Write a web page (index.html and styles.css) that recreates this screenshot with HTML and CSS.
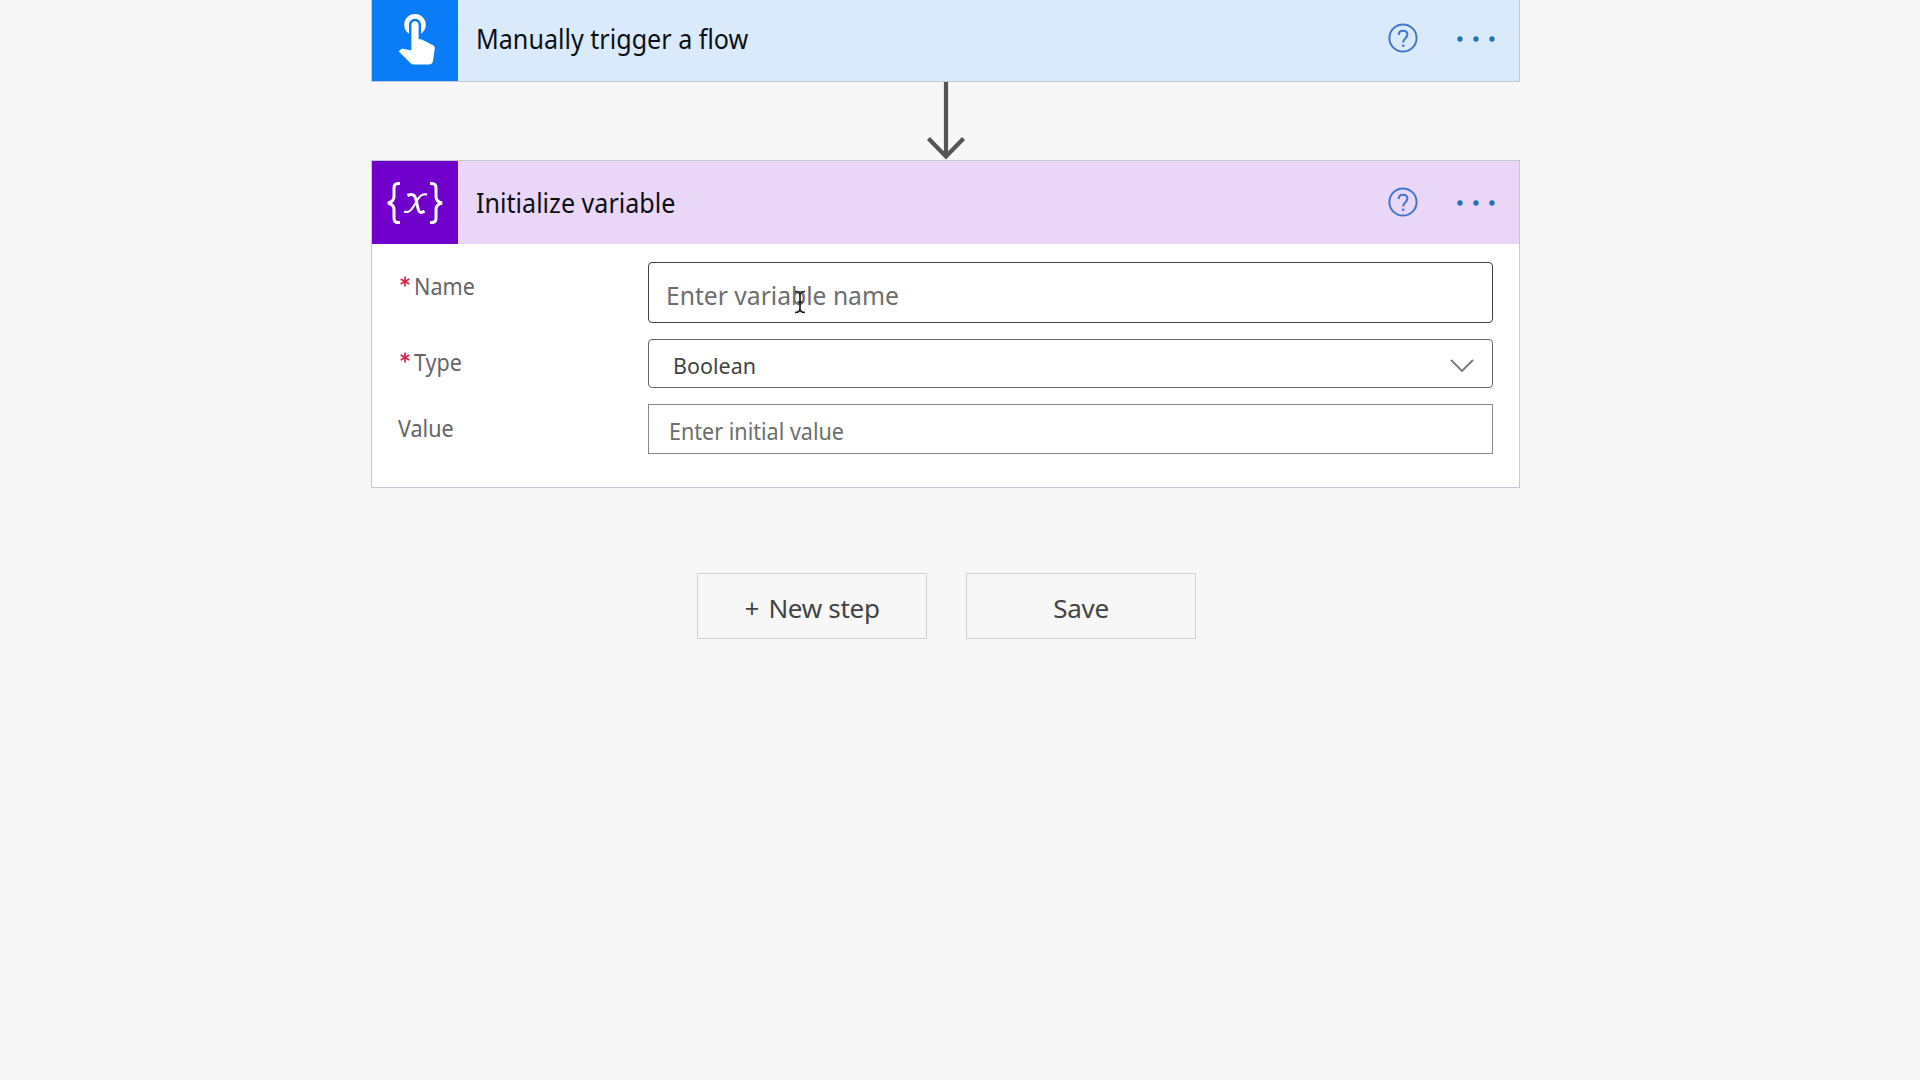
FILE: index.html
```
<!DOCTYPE html>
<html lang="en">
<head>
<meta charset="utf-8">
<title>Flow designer</title>
<link rel="stylesheet" href="styles.css">
</head>
<body>
<main class="flow">
  <section class="card card-trigger">
    <header class="head">
      <div class="tile tile-touch">
        <svg width="38.4" height="50.4" viewBox="4 3 16 21" fill="#fff"><path d="M9 11.24V7.5C9 6.12 10.12 5 11.5 5S14 6.12 14 7.5v3.74c1.21-.81 2-2.18 2-3.74C16 5.01 13.99 3 11.5 3S7 5.01 7 7.5c0 1.56.79 2.93 2 3.74zm9.84 4.63l-4.54-2.26c-.17-.07-.35-.11-.54-.11H13v-6c0-.83-.67-1.5-1.5-1.5S10 6.67 10 7.5v10.74l-3.43-.72c-.08-.01-.15-.03-.24-.03-.31 0-.59.13-.79.33l-.79.8 4.94 4.94c.27.27.65.44 1.06.44h6.79c.75 0 1.33-.55 1.44-1.28l.75-5.27c.01-.07.02-.14.02-.2 0-.62-.38-1.16-.91-1.38z"/></svg>
      </div>
      <h2 class="title">Manually trigger a flow</h2>
      <svg class="help" width="30" height="30" viewBox="0 0 30 30" fill="none" stroke="#3f76cf" stroke-width="2"><circle cx="15" cy="15" r="13.6"/><path d="M10.7 11.9c0-2.6 1.8-4.2 4.4-4.2s4.3 1.6 4.3 3.9c0 3.5-4.2 3.8-4.2 7.9"/><circle cx="15.2" cy="22.8" r="1.3" fill="#3f76cf" stroke="none"/></svg>
      <svg class="more" width="38" height="8" viewBox="0 0 38 8" fill="#2277b3"><circle cx="3" cy="4" r="2.7"/><circle cx="19" cy="4" r="2.7"/><circle cx="35" cy="4" r="2.7"/></svg>
    </header>
  </section>

  <svg class="arrow" width="40" height="78" viewBox="0 0 40 78" fill="none" stroke="#555" stroke-width="4.2"><path d="M20 0v75M2.500 56.500 20 74.500l17.500-18"/></svg>

  <section class="card card-variable">
    <header class="head">
      <div class="tile tile-variable">
        <svg width="60" height="44" viewBox="0 0 60 44" fill="none" stroke="#fff" stroke-width="3"><path d="M15 2.500h-2q-4 0-4 4.500v8.500q0 5-6 6.500 6 1.500 6 6.500v8.500q0 4.500 4 4.500h2M45 2.500h2q4 0 4 4.500v8.500q0 5 6 6.500-6 1.500-6 6.500v8.500q0 4.500-4 4.500h-2"/><path d="M22.500 14.500c7-3 8 1 9.500 8.500s2.500 10.500 7.500 7" stroke-width="3"/><path d="M42 13.500c-7-2-9.500 6-12.500 10.500s-5 8.500-10.500 6.500" stroke-width="2.100"/></svg>
      </div>
      <h2 class="title">Initialize variable</h2>
      <svg class="help" width="30" height="30" viewBox="0 0 30 30" fill="none" stroke="#3f76cf" stroke-width="2"><circle cx="15" cy="15" r="13.6"/><path d="M10.7 11.9c0-2.6 1.8-4.2 4.4-4.2s4.3 1.6 4.3 3.9c0 3.5-4.2 3.8-4.2 7.9"/><circle cx="15.2" cy="22.8" r="1.3" fill="#3f76cf" stroke="none"/></svg>
      <svg class="more" width="38" height="8" viewBox="0 0 38 8" fill="#2277b3"><circle cx="3" cy="4" r="2.7"/><circle cx="19" cy="4" r="2.7"/><circle cx="35" cy="4" r="2.7"/></svg>
    </header>
    <div class="fields">
      <div class="label label-name"><svg class="star" width="10" height="11" viewBox="0 0 12 12" stroke="#d6244a" stroke-width="2"><path d="M6 0v12M.8 3l10.400 6M.8 9l10.400-6"/></svg><span class="narrow">Name</span></div>
      <div class="box box-name"><span class="hint">Enter variable name</span>
        <svg class="cursor" width="12" height="26" viewBox="0 0 12 26" fill="none" stroke="#222" stroke-width="1.700"><path d="M1 2.500q5 0 5 4v13q0 4-5 4M11 2.500q-5 0-5 4M6 19.500q0 4 5 4M3.500 13h5"/></svg>
      </div>
      <div class="label label-type"><svg class="star" width="10" height="11" viewBox="0 0 12 12" stroke="#d6244a" stroke-width="2"><path d="M6 0v12M.8 3l10.400 6M.8 9l10.400-6"/></svg><span class="narrow">Type</span></div>
      <div class="box box-type"><span class="choice">Boolean</span>
        <svg width="24" height="14" viewBox="0 0 24 14" fill="none" stroke="#777" stroke-width="1.800"><path d="M1 1l11 11L23 1"/></svg>
      </div>
      <div class="label label-value"><span class="narrow">Value</span></div>
      <div class="box box-value"><span class="narrow">Enter initial value</span></div>
    </div>
  </section>

  <div class="actions">
    <button class="button" type="button"><span class="plus">+</span> New step</button>
    <button class="button" type="button">Save</button>
  </div>
</main>
</body>
</html>
```
FILE: styles.css
```
* { box-sizing: border-box; }

body {
  margin: 0;
  height: 1080px;
  overflow: hidden;
  background: #f7f7f7;
  font-family: "Noto Sans", sans-serif;
}

svg { display: block; flex: none; }

.flow {
  display: flex;
  flex-direction: column;
  align-items: center;
  width: 1892px;
}

.card {
  width: 1149px;
  margin-right: 1px;
  border: 1px solid #c3c9d0;
  background: #fff;
}

.card-trigger { height: 82px; border-top: 0; }
.card-variable { height: 328px; }

.head {
  display: flex;
  align-items: center;
  padding-right: 24px;
}

.card-trigger .head { height: 81px; padding-bottom: 4px; background: #daeafb; }
.card-variable .head { height: 83px; background: #ead7f8; }

.tile {
  display: flex;
  align-items: center;
  justify-content: center;
  align-self: stretch;
  width: 86px;
}

.tile-touch { height: 81px; padding-left: 2px; padding-bottom: 2px; background: #0b7cf8; }
.tile-variable { background: #7000cc; }

.title {
  flex: 1;
  margin: 0 0 0 18px;
  font-size: 27px;
  font-weight: 400;
  line-height: 40px;
  color: #0c1014;
  transform: scaleX(.93);
  transform-origin: left;
}

.help { margin-bottom: 1px; }

.more { margin: 1px 0 0 39px; }

.fields {
  display: grid;
  grid-template-columns: 250px 845px;
  grid-template-rows: 61px 49px 50px;
  row-gap: 16px;
  padding: 18px 0 0 26px;
  font-size: 23px;
  line-height: 32px;
  color: #666;
}

.label { display: flex; gap: 4px; }
.label-name { padding-top: 8px; }
.label-type { padding-top: 7px; }
.label-value { padding-top: 8px; }
.star { margin: 6px 0 0 2px; }

.narrow { transform: scaleX(.938); transform-origin: left; }

.box {
  display: flex;
  align-items: center;
  border: 1px solid #888;
  background: #fff;
  color: #6e6e6e;
}

.box-name {
  position: relative;
  padding: 5px 0 0 17px;
  border-color: #404040;
  border-radius: 4px;
  font-size: 25px;
}

.hint { transform: scaleX(.986); transform-origin: left; }

.cursor { position: absolute; left: 145px; top: 26px; }

.box-type {
  justify-content: space-between;
  padding: 4px 18px 0 24px;
  border-color: #666;
  border-radius: 4px;
  font-size: 22.5px;
  color: #444;
}

.choice { transform: scaleX(.955); transform-origin: left; }

.box-value { padding: 4px 0 0 20px; }

.actions {
  display: flex;
  gap: 39px;
  margin-top: 85px;
}

.button {
  width: 230px;
  height: 66px;
  padding: 4px 0 0 1px;
  border: 1px solid #d2d2d2;
  background: #f7f7f7;
  color: #444;
  font: 26px "Noto Sans", sans-serif;
  letter-spacing: -.3px;
}

.plus { margin-right: 3px; }
```
